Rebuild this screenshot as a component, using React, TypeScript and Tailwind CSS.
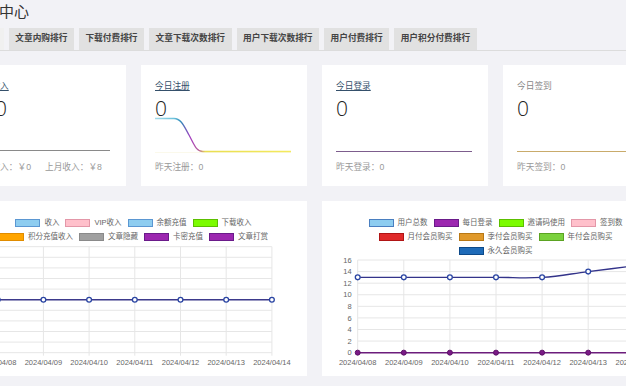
import React from 'react';

const tabs = ['收入统计', '文章内购排行', '下载付费排行', '文章下载次数排行', '用户下载次数排行', '用户付费排行', '用户积分付费排行'];

const dates = ['2024/04/08', '2024/04/09', '2024/04/10', '2024/04/11', '2024/04/12', '2024/04/13', '2024/04/14'];

type LegendItem = { label: string; box: string };

const incomeLegend: LegendItem[][] = [
  [
    { label: '收入', box: 'bg-[#8ecdf0] border-[#5b97d2]' },
    { label: 'VIP收入', box: 'bg-[#ffc0cb] border-[#e397a8]' },
    { label: '余额充值', box: 'bg-[#8ecdf0] border-[#5b97d2]' },
    { label: '下载收入', box: 'bg-[#7cfc00] border-[#5cbf00]' },
  ],
  [
    { label: '积分充值收入', box: 'bg-[#ffa500] border-[#e08c00]' },
    { label: '文章隐藏', box: 'bg-[#a0a0a0] border-[#8a8a8a]' },
    { label: '卡密充值', box: 'bg-[#9c27b0] border-[#6a1b8a]' },
    { label: '文章打赏', box: 'bg-[#9c27b0] border-[#6a1b8a]' },
  ],
];

const userLegend: LegendItem[][] = [
  [
    { label: '用户总数', box: 'bg-[#8ecdf0] border-[#4a7fc0]' },
    { label: '每日登录', box: 'bg-[#9c27b0] border-[#6a1b8a]' },
    { label: '邀请码使用', box: 'bg-[#7cfc00] border-[#5cbf00]' },
    { label: '签到数', box: 'bg-[#ffc0cb] border-[#e397a8]' },
  ],
  [
    { label: '月付会员购买', box: 'bg-[#e02a2a] border-[#b01515]' },
    { label: '季付会员购买', box: 'bg-[#e0992a] border-[#b87815]' },
    { label: '年付会员购买', box: 'bg-[#7bd13d] border-[#5ba322]' },
  ],
  [{ label: '永久会员购买', box: 'bg-[#1e6bb8] border-[#0d4a8a]' }],
];

function Legend({ rows }: { rows: LegendItem[][] }) {
  return (
    <div className="pt-[15px]">
      {rows.map((row, i) => (
        <div key={i} className="flex h-[14px] items-center justify-center gap-[6px]">
          {row.map((it) => (
            <div key={it.label} className="flex items-center">
              <span className={`mr-[4px] block h-[8px] w-[25px] border ${it.box}`} />
              <span className="whitespace-nowrap text-[7.5px] leading-none text-[#666]">{it.label}</span>
            </div>
          ))}
        </div>
      ))}
    </div>
  );
}

// chart.js style spline
function splinePath(pts: [number, number][], t = 0.4) {
  const ctrl = pts.map((p, i) => {
    const p0 = pts[i - 1] ?? p;
    const p2 = pts[i + 1] ?? p;
    const d01 = Math.hypot(p[0] - p0[0], p[1] - p0[1]);
    const d12 = Math.hypot(p2[0] - p[0], p2[1] - p[1]);
    const sum = d01 + d12 || 1;
    const fa = (t * d01) / sum;
    const fb = (t * d12) / sum;
    return {
      prev: [p[0] - fa * (p2[0] - p0[0]), p[1] - fa * (p2[1] - p0[1])],
      next: [p[0] + fb * (p2[0] - p0[0]), p[1] + fb * (p2[1] - p0[1])],
    };
  });
  let d = `M${pts[0][0]},${pts[0][1]}`;
  for (let i = 1; i < pts.length; i++) {
    d += ` C${ctrl[i - 1].next.join(',')} ${ctrl[i].prev.join(',')} ${pts[i].join(',')}`;
  }
  return d;
}

function IncomeChart() {
  const X = (j: number) => 37.7 + 45.7 * j;
  const Y = (i: number) => 2.7 + 10.6 * i;
  const yLabels = ['1.0', '0.8', '0.6', '0.4', '0.2', '0', '-0.2', '-0.4', '-0.6', '-0.8', '-1.0'];
  return (
    <svg width="347" height="129" className="block">
      {yLabels.map((l, i) => (
        <g key={l}>
          <line x1={X(0)} x2={X(6)} y1={Y(i)} y2={Y(i)} stroke="#e6e6e6" strokeWidth="1" />
          <text x={X(0) - 6} y={Y(i) + 2.6} fontSize="7.5" fill="#666" textAnchor="end">{l}</text>
        </g>
      ))}
      {dates.map((d, j) => (
        <g key={d}>
          <line x1={X(j)} x2={X(j)} y1={Y(0)} y2={Y(10) + 3} stroke="#e6e6e6" strokeWidth="1" />
          <text x={X(j)} y={121.4} fontSize="7.5" fill="#666" textAnchor="middle">{d}</text>
        </g>
      ))}
      <line x1={X(0)} x2={X(6)} y1={Y(5)} y2={Y(5)} stroke="#3d3a8c" strokeWidth="1.4" />
      {dates.map((d, j) => (
        <circle key={d} cx={X(j)} cy={Y(5)} r="2.4" fill="#fff" stroke="#2a45a3" strokeWidth="1.3" />
      ))}
    </svg>
  );
}

function UserChart() {
  const X = (j: number) => 35.7 + 46.1 * j;
  const Y = (v: number) => 2 + (16 - v) * 5.79;
  const totals = [13, 13, 13, 13, 13, 14, 15];
  const pts = totals.map((v, j) => [X(j), Y(v)] as [number, number]);
  return (
    <svg width="347" height="115" className="block">
      {[16, 14, 12, 10, 8, 6, 4, 2, 0].map((v) => (
        <g key={v}>
          <line x1={X(0)} x2={X(6)} y1={Y(v)} y2={Y(v)} stroke="#e6e6e6" strokeWidth="1" />
          <text x={29.7} y={Y(v) + 2.6} fontSize="7.5" fill="#666" textAnchor="end">{v}</text>
        </g>
      ))}
      {dates.map((d, j) => (
        <g key={d}>
          <line x1={X(j)} x2={X(j)} y1={Y(16)} y2={Y(0) + 3} stroke="#e6e6e6" strokeWidth="1" />
          <text x={X(j)} y={107.4} fontSize="7.5" fill="#666" textAnchor="middle">{d}</text>
        </g>
      ))}
      <line x1={X(0)} x2={X(6)} y1={Y(0)} y2={Y(0)} stroke="#6c1d7c" strokeWidth="1.5" />
      {dates.map((d, j) => (
        <circle key={d} cx={X(j)} cy={Y(0)} r="2.5" fill="#7a1a86" stroke="#5e1268" strokeWidth="1" />
      ))}
      <path d={splinePath(pts)} fill="none" stroke="#33338a" strokeWidth="1.4" />
      {pts.map((p, j) => (
        <circle key={j} cx={p[0]} cy={p[1]} r="2.4" fill="#fff" stroke="#2a45a3" strokeWidth="1.3" />
      ))}
    </svg>
  );
}

type Stat = { title: string; value: string; link: boolean; stroke?: string; lineY?: number; footer: string[] };

const stats: Stat[] = [
  { title: '今日收入', value: '￥0', link: true, stroke: '#8a8a8a', lineY: 33.5, footer: ['本月收入：￥0', '上月收入：￥8'] },
  { title: '今日注册', value: '0', link: true, footer: ['昨天注册：0'] },
  { title: '今日登录', value: '0', link: true, stroke: '#7d5d8d', footer: ['昨天登录：0'] },
  { title: '今日签到', value: '0', link: false, stroke: '#c9ab6b', footer: ['昨天签到：0'] },
];

function StatCard({ s }: { s: Stat }) {
  return (
    <div className="flex h-[121px] w-[166px] shrink-0 flex-col bg-white pl-[14px] pr-[15px] pt-[15px]">
      <div
        className={`text-[8.7px] leading-[12px] ${
          s.link ? 'text-[#35506b] underline underline-offset-[1px]' : 'text-[#888]'
        }`}
      >
        {s.title}
      </div>
      <div className="mt-[7px] font-['Open_Sans','Noto_Sans_CJK_SC',sans-serif] text-[21px] font-light leading-[18px] text-[#222]">
        {s.value}
      </div>
      <svg width="137" height="36" className="block">
        {s.stroke ? (
          <line x1="0" x2="136" y1={s.lineY ?? 34.5} y2={s.lineY ?? 34.5} stroke={s.stroke} strokeWidth="1.2" />
        ) : (
          <>
            <defs>
              <linearGradient id="reg" gradientUnits="userSpaceOnUse" x1="0" y1="0" x2="136" y2="0">
                <stop offset="0" stopColor="#a6dbe8" />
                <stop offset="0.14" stopColor="#6cc2dc" />
                <stop offset="0.19" stopColor="#2f8ab8" />
                <stop offset="0.26" stopColor="#a33cbf" />
                <stop offset="0.32" stopColor="#b9609a" />
                <stop offset="0.37" stopColor="#e9de52" />
                <stop offset="1" stopColor="#f4ea5e" />
              </linearGradient>
            </defs>
            <path
              d="M0,36.5 L136,36.5"
              stroke="#f7f3d8"
              strokeWidth="2"
              fill="none"
            />
            <path
              d="M0,1.5 L19,1.5 C26,1.5 29,9 34,18 C39,27 41,34.5 48,34.5 L136,34.5"
              stroke="url(#reg)"
              strokeWidth="1.3"
              fill="none"
            />
          </>
        )}
      </svg>
      <div className="mt-[8px] flex whitespace-nowrap text-[8.7px] leading-[12px] text-[#999]">
        {s.footer.map((f, i) => (
          <span key={f} className={i > 0 ? 'ml-[14px]' : ''}>
            {f}
          </span>
        ))}
      </div>
    </div>
  );
}

export default function App() {
  return (
    <div className="h-[386px] w-[626px] overflow-hidden bg-[#f2f2f6] font-['Liberation_Sans','Noto_Sans_CJK_SC',sans-serif] text-[#333]">
      <div className="-ml-[55px] w-[760px] px-[15px]">
        <div className="h-[28px] pl-[9px] pt-[2px] text-[15px] leading-[20px] text-[#333]">数据中心</div>

        <div className="-ml-[4px] flex gap-[5px] border-b border-[#dcdcdc]">
          {tabs.map((t, i) => (
            <div
              key={t}
              className={`flex h-[22px] items-center px-[6.5px] text-[8.7px] font-bold whitespace-nowrap text-[#444] ${
                i === 0 ? 'bg-[#f0f0f0]' : 'bg-[#e1e1e1]'
              }`}
            >
              {t}
            </div>
          ))}
        </div>

        <div className="mt-[14px] flex gap-[15px]">
          {stats.map((s) => (
            <StatCard key={s.title} s={s} />
          ))}
        </div>

        <div className="mt-[15px] flex gap-[15px]">
          <div className="h-[175px] w-[347px] shrink-0 bg-white">
            <Legend rows={incomeLegend} />
            <IncomeChart />
          </div>
          <div className="h-[175px] w-[347px] shrink-0 bg-white">
            <Legend rows={userLegend} />
            <UserChart />
          </div>
        </div>
      </div>
    </div>
  );
}
